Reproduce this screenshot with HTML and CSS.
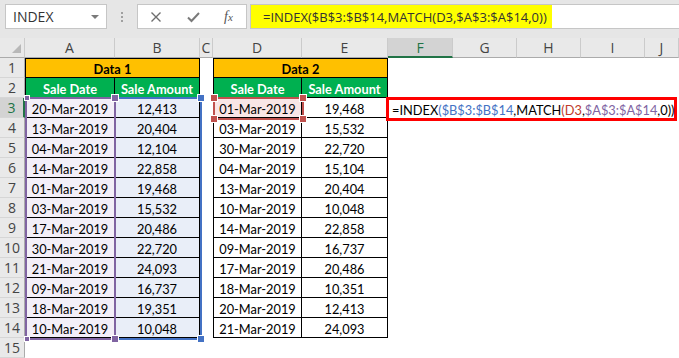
FILE: index.html
```html
<!DOCTYPE html>
<html lang="en">
<head>
    <meta charset="UTF-8">
    <meta name="viewport" content="width=device-width, initial-scale=1.0">
    <title>INDEX MATCH - Excel</title>
    <link rel="stylesheet" href="styles.css">
</head>
<body>
    <div class="ribbon">
        <div class="namebox"><span>INDEX</span><span class="caret"></span></div>
        <div class="grip"><i></i><i></i><i></i></div>
        <div class="tools">
            <svg class="ico" width="12" height="12" viewBox="0 0 12 12"><path d="M1.5 1.5 L10.5 10.5 M10.5 1.5 L1.5 10.5" stroke="#6e6e6e" stroke-width="1.4" fill="none"/></svg>
            <svg class="ico" width="13" height="12" viewBox="0 0 13 12"><path d="M1 6.5 L4.5 10 L12 2" stroke="#7a7a7a" stroke-width="2" fill="none"/></svg>
            <span class="fx"><i>f</i><span>x</span></span>
        </div>
        <div class="formula"><span class="hl">=INDEX($B$3:$B$14,MATCH(D3,$A$3:$A$14,0))</span></div>
    </div>

    <div class="sheet">
        <!-- column headers -->
        <div class="ch corner"><span class="tri"></span></div>
        <div class="ch">A</div>
        <div class="ch">B</div>
        <div class="ch">C</div>
        <div class="ch">D</div>
        <div class="ch">E</div>
        <div class="ch active">F</div>
        <div class="ch">G</div>
        <div class="ch">H</div>
        <div class="ch">I</div>
        <div class="ch">J</div>

        <!-- row 1 -->
        <div class="rh">1</div>
        <div class="c t tl tt title">Data 1</div>
        <div class="c"></div>
        <div class="c t tl tt title">Data 2</div>
        <div class="c rest"></div>

        <!-- row 2 -->
        <div class="rh">2</div>
        <div class="c t tl head">Sale Date</div>
        <div class="c t head">Sale Amount</div>
        <div class="c"></div>
        <div class="c t tl head">Sale Date</div>
        <div class="c t head">Sale Amount</div>
        <div class="c rest"></div>

        <!-- row 3 -->
        <div class="rh active">3</div>
        <div class="c t tl fa anchor">20-Mar-2019
            <span class="range ra">
                <b class="hd tl-h"></b><b class="hd tr-h"></b><b class="hd bl-h"></b><b class="hd br-h"></b>
            </span>
        </div>
        <div class="c t fb anchor">12,413
            <span class="range rb">
                <b class="hd tr-h"></b><b class="hd br-h"></b>
            </span>
        </div>
        <div class="c"></div>
        <div class="c t tl fd anchor">01-Mar-2019
            <span class="range rd">
                <b class="hd tl-h"></b><b class="hd tr-h"></b><b class="hd bl-h"></b><b class="hd br-h"></b>
            </span>
        </div>
        <div class="c t">19,468</div>
        <div class="c rest edit">=INDEX<span class="k-b">(</span><span class="k-b">$B$3:$B$14</span>,MATCH<span class="k-r">(</span><span class="k-r">D3</span>,<span class="k-p">$A$3:$A$14</span>,0))</div>

        <div class="rh">4</div>
        <div class="c t tl fa">13-Mar-2019</div>
        <div class="c t fb">20,404</div>
        <div class="c"></div>
        <div class="c t tl">03-Mar-2019</div>
        <div class="c t">15,532</div>
        <div class="c rest"></div>

        <div class="rh">5</div>
        <div class="c t tl fa">04-Mar-2019</div>
        <div class="c t fb">12,104</div>
        <div class="c"></div>
        <div class="c t tl">30-Mar-2019</div>
        <div class="c t">22,720</div>
        <div class="c rest"></div>

        <div class="rh">6</div>
        <div class="c t tl fa">14-Mar-2019</div>
        <div class="c t fb">22,858</div>
        <div class="c"></div>
        <div class="c t tl">04-Mar-2019</div>
        <div class="c t">15,104</div>
        <div class="c rest"></div>

        <div class="rh">7</div>
        <div class="c t tl fa">01-Mar-2019</div>
        <div class="c t fb">19,468</div>
        <div class="c"></div>
        <div class="c t tl">13-Mar-2019</div>
        <div class="c t">20,404</div>
        <div class="c rest"></div>

        <div class="rh">8</div>
        <div class="c t tl fa">03-Mar-2019</div>
        <div class="c t fb">15,532</div>
        <div class="c"></div>
        <div class="c t tl">10-Mar-2019</div>
        <div class="c t">10,048</div>
        <div class="c rest"></div>

        <div class="rh">9</div>
        <div class="c t tl fa">17-Mar-2019</div>
        <div class="c t fb">20,486</div>
        <div class="c"></div>
        <div class="c t tl">14-Mar-2019</div>
        <div class="c t">22,858</div>
        <div class="c rest"></div>

        <div class="rh">10</div>
        <div class="c t tl fa">30-Mar-2019</div>
        <div class="c t fb">22,720</div>
        <div class="c"></div>
        <div class="c t tl">09-Mar-2019</div>
        <div class="c t">16,737</div>
        <div class="c rest"></div>

        <div class="rh">11</div>
        <div class="c t tl fa">21-Mar-2019</div>
        <div class="c t fb">24,093</div>
        <div class="c"></div>
        <div class="c t tl">17-Mar-2019</div>
        <div class="c t">20,486</div>
        <div class="c rest"></div>

        <div class="rh">12</div>
        <div class="c t tl fa">09-Mar-2019</div>
        <div class="c t fb">16,737</div>
        <div class="c"></div>
        <div class="c t tl">18-Mar-2019</div>
        <div class="c t">10,351</div>
        <div class="c rest"></div>

        <div class="rh">13</div>
        <div class="c t tl fa">18-Mar-2019</div>
        <div class="c t fb">19,351</div>
        <div class="c"></div>
        <div class="c t tl">20-Mar-2019</div>
        <div class="c t">12,413</div>
        <div class="c rest"></div>

        <div class="rh">14</div>
        <div class="c t tl fa">10-Mar-2019</div>
        <div class="c t fb">10,048</div>
        <div class="c"></div>
        <div class="c t tl">21-Mar-2019</div>
        <div class="c t">24,093</div>
        <div class="c rest"></div>

        <div class="rh">15</div>
        <div class="c wide"></div>
    </div>
</body>
</html>
```

FILE: styles.css
```css
* {
    margin: 0;
    padding: 0;
    box-sizing: border-box;
}

body {
    width: 679px;
    height: 358px;
    overflow: hidden;
    background: #fff;
    font-family: Lato, "Open Sans", sans-serif;
}

/* formula bar */
.ribbon {
    height: 38px;
    background: #e6e6e6;
    display: flex;
    align-items: flex-start;
    padding: 4px 0 0 5px;
}

.namebox {
    width: 102px;
    height: 25px;
    background: #fff;
    border: 1px solid #c6c6c6;
    display: flex;
    align-items: center;
    justify-content: space-between;
    padding: 0 7px 0 7px;
    font: 14px "Open Sans", sans-serif;
    color: #333;
}

.caret {
    border-left: 4px solid transparent;
    border-right: 4px solid transparent;
    border-top: 4px solid #7a7a7a;
}

.grip {
    width: 30px;
    height: 25px;
    display: flex;
    flex-direction: column;
    align-items: center;
    justify-content: center;
    gap: 2px;
}

.grip i {
    width: 2px;
    height: 2px;
    background: #a0a0a0;
}

.tools {
    width: 110px;
    height: 25px;
    background: #fff;
    border: 1px solid #c6c6c6;
    display: flex;
    align-items: center;
    padding-left: 12px;
    gap: 25px;
}

.fx {
    font: italic 14px "Liberation Serif", serif;
    color: #555;
    margin-left: -1px;
}

.fx span {
    font-size: 11px;
}

.formula {
    flex: 1;
    height: 25px;
    margin-left: 3px;
    background: #fff;
    border: 1px solid #c6c6c6;
    border-right: none;
}

.formula .hl {
    display: flex;
    align-items: center;
    width: 301px;
    height: 100%;
    background: #ffff00;
    padding-left: 12px;
    font: 13px "Open Sans", sans-serif;
    color: #333;
    white-space: nowrap;
}

/* grid */
.sheet {
    display: grid;
    grid-template-columns: 25px 90px 85px 13px 89px 86px 65px 64px 64px 64px 34px;
    grid-template-rows: repeat(16, 20px);
    font-size: 12.8px;
}

.ch {
    background: #e9e9e9;
    border-right: 1px solid #cbcbcb;
    border-bottom: 1px solid #ababab;
    color: #444;
    font: 14px "Open Sans", sans-serif;
    display: flex;
    align-items: center;
    justify-content: center;
}

.ch.active {
    background: #d3d3d3;
    color: #217346;
    border-bottom: 2px solid #217346;
}

.corner {
    position: relative;
}

.tri {
    position: absolute;
    right: 3px;
    bottom: 4px;
    width: 9px;
    height: 9px;
    background: #b8b8b8;
    clip-path: polygon(100% 0, 100% 100%, 0 100%);
}

.rh {
    background: #e9e9e9;
    border-right: 1px solid #ababab;
    border-bottom: 1px solid #d6d6d6;
    color: #444;
    font: 14px "Open Sans", sans-serif;
    display: flex;
    align-items: center;
    justify-content: center;
}

.rh.active {
    background: #d3d3d3;
    color: #217346;
    border-right: 2px solid #217346;
}

.c {
    display: flex;
    align-items: center;
    justify-content: center;
    padding-top: 2px;
    color: #000;
    white-space: nowrap;
}

.t {
    border-right: 1px solid #000;
    border-bottom: 1px solid #000;
}

.tl {
    border-left: 1px solid #000;
}

.tt {
    border-top: 1px solid #000;
}

.title {
    grid-column: span 2;
    background: #ffc000;
    font-weight: 700;
}

.head {
    background: #00b050;
    color: #fff;
    font-weight: 700;
}

.rest {
    grid-column: span 5;
}

.wide {
    grid-column: span 10;
}

.fa {
    background: #f3eff8;
}

.fb {
    background: #e9eef8;
}

.fd {
    background: #f9e6e6;
}

/* range highlights while editing the formula */
.anchor {
    position: relative;
}

.range {
    position: absolute;
    border: 2px solid;
    pointer-events: none;
}

.ra {
    left: -1px;
    top: -1px;
    width: 91px;
    height: 243px;
    border-color: #8064a2;
    z-index: 3;
}

.rb {
    left: -1px;
    top: -1px;
    width: 88px;
    height: 243px;
    border-color: #4472c4;
    z-index: 2;
}

.rd {
    left: -1px;
    top: -1px;
    width: 91px;
    height: 23px;
    border-color: #c0504d;
    z-index: 2;
}

.hd {
    position: absolute;
    width: 6px;
    height: 6px;
    box-shadow: 0 0 0 1px #fff;
}

.ra .hd { background: #8064a2; }
.rb .hd { background: #4472c4; }
.rd .hd { background: #c0504d; }

.tl-h { left: -4px; top: -4px; }
.tr-h { right: -4px; top: -4px; }
.bl-h { left: -4px; bottom: -4px; }
.br-h { right: -4px; bottom: -4px; }

.ra .tl-h,
.ra .bl-h {
    width: 4px;
    height: 4px;
    left: -2px;
}

.ra .tl-h { top: -3px; }
.ra .bl-h { bottom: -3px; }

.edit {
    position: relative;
    z-index: 4;
    justify-content: flex-start;
    margin: -1px 2px -3px -2px;
    padding-left: 3px;
    padding-top: 1px;
    border: 3px solid #ff0000;
    font-size: 12.8px;
    overflow: visible;
}

.k-b { color: #4472c4; }
.k-r { color: #c0392b; }
.k-p { color: #8064a2; }
```
